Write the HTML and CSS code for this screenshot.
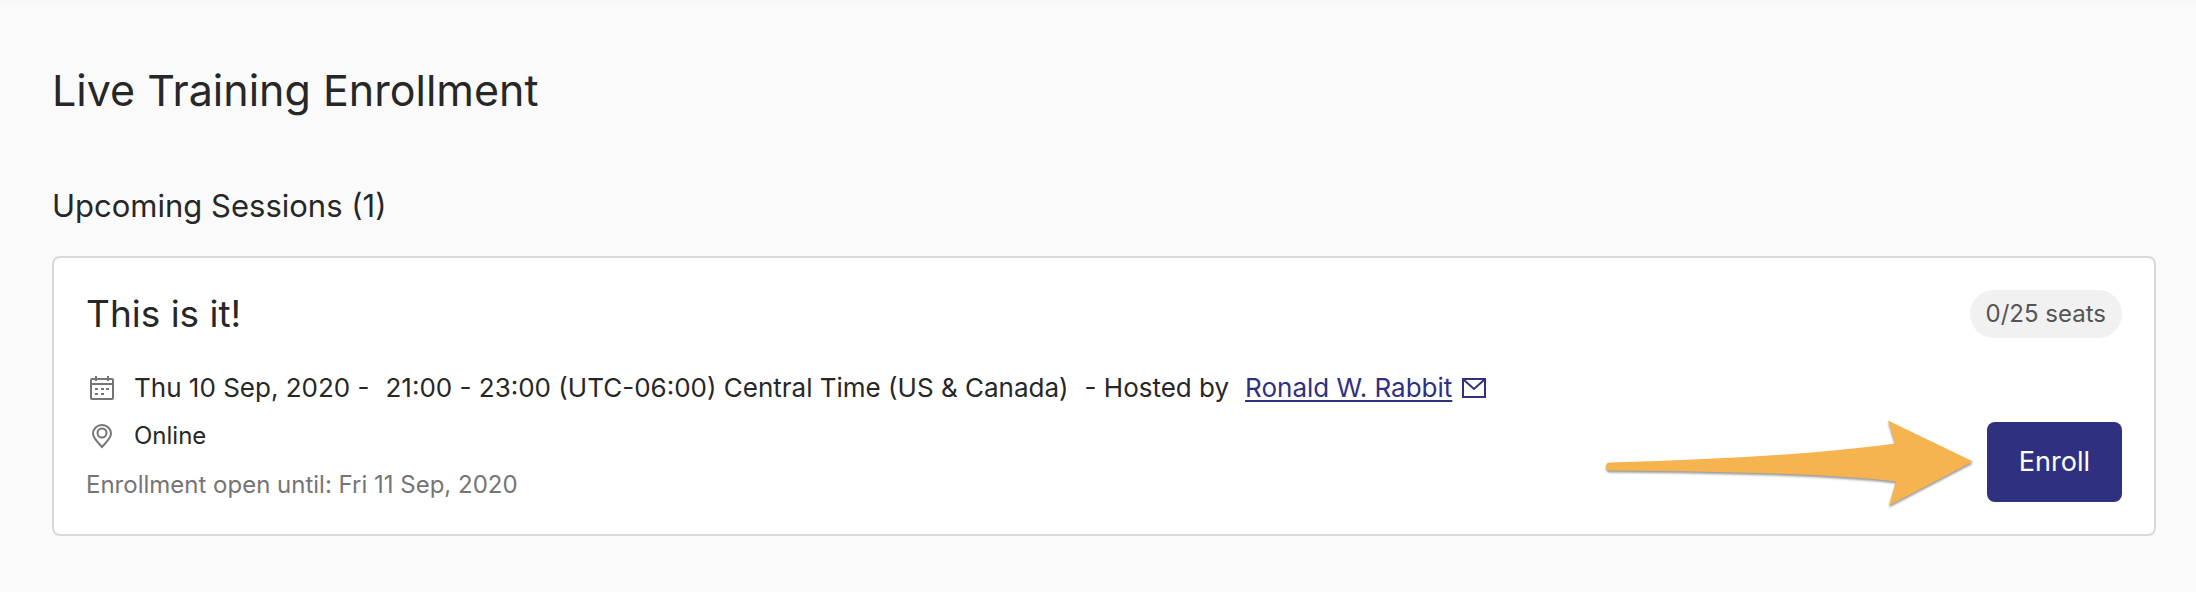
FILE: index.html
```html
<!DOCTYPE html>
<html lang="en">
<head>
    <meta charset="UTF-8">
    <meta name="viewport" content="width=device-width, initial-scale=1.0">
    <title>Live Training Enrollment</title>
    <link rel="stylesheet" href="styles.css">
</head>
<body>
    <main class="page">
        <h1>Live Training Enrollment</h1>
        <h2>Upcoming Sessions (1)</h2>

        <section class="session">
            <div class="session-info">
                <h3>This is it!</h3>
                <div class="row date">
                    <svg class="icon" viewBox="0 0 32 32" fill="none" stroke="#757575" stroke-width="2">
                        <rect x="5" y="7" width="22" height="20" rx="1"/>
                        <path d="M5 12h22M10 4v5M22 4v5"/>
                        <path d="M9 17h3M15 17h3M20 17h3M9 22h3M15 22h3"/>
                    </svg>
                    <div class="when">
                        <span>Thu 10 Sep, 2020 -</span>
                        <span>21:00 - 23:00 (UTC-06:00) Central Time (US &amp; Canada)</span>
                        <span>- Hosted by</span>
                        <div class="host">
                            <a href="#">Ronald W. Rabbit</a>
                            <a href="#" class="mail" aria-label="Email Ronald W. Rabbit">
                                <svg viewBox="0 0 24 20" fill="none" stroke="#2f3180" stroke-width="2">
                                    <rect x="1" y="1" width="22" height="18"/>
                                    <path d="M2 2l10 9 10-9"/>
                                </svg>
                            </a>
                        </div>
                    </div>
                </div>
                <div class="row">
                    <svg class="icon" viewBox="0 0 32 32" fill="none" stroke="#757575" stroke-width="2">
                        <path d="M16 27C12 22.500 7 18 7 13.500a9 8.500 0 0 1 18 0C25 18 20 22.500 16 27z"/>
                        <circle cx="16" cy="13" r="4.500"/>
                    </svg>
                    <span>Online</span>
                </div>
                <p class="deadline">Enrollment open until: Fri 11 Sep, 2020</p>
            </div>

            <div class="session-side">
                <span class="seats">0/25 seats</span>
                <div class="enroll">
                    <svg class="arrow" viewBox="0 0 372 96" aria-hidden="true">
                        <path fill="#f5b450" d="M9 46.500Q200 41 294 27.500L287 4.500 372 45.500 288 89.500 295 65.500Q222 56 9 54.500A4 4 0 0 1 9 46.500z"/>
                    </svg>
                    <button type="button">Enroll</button>
                </div>
            </div>
        </section>
    </main>
</body>
</html>
```
FILE: styles.css
```css
* {
    box-sizing: border-box;
}

body {
    margin: 0;
    background: linear-gradient(#f7f7f7, #fafafa 6px) #fafafa;
    color: #272727;
    font-family: Inter, "Liberation Sans", sans-serif;
    font-size: 24px;
}

h1, h2, h3, p {
    margin: 0;
    font-weight: 400;
}

.page {
    padding: 62px 40px 56px 52px;
}

h1 {
    font-size: 43px;
    line-height: 56px;
}

h2 {
    margin: 68px 0 30px;
    font-size: 31px;
    line-height: 40px;
}

h3 {
    margin-bottom: 26px;
    font-size: 37px;
    line-height: 48px;
}

.session {
    display: flex;
    justify-content: space-between;
    padding: 32px;
    background-color: #fff;
    border: 2px solid #d9d9d9;
    border-radius: 8px;
}

.row {
    display: flex;
    align-items: center;
    gap: 16px;
    line-height: 48px;
}

.date {
    font-size: 26px;
}

.when {
    display: flex;
    align-items: center;
    gap: 16px;
}

.host {
    display: flex;
    align-items: center;
    gap: 10px;
}

.icon {
    width: 32px;
    height: 32px;
}

a {
    color: #2f3180;
    text-underline-offset: 3px;
    text-decoration-thickness: 2px;
}

.mail {
    display: flex;
}

.mail svg {
    width: 24px;
    height: 20px;
}

.deadline {
    margin-top: 8px;
    color: #757575;
    line-height: 34px;
}

.session-side {
    display: flex;
    flex-direction: column;
    align-items: flex-end;
    justify-content: space-between;
}

.seats {
    padding: 0 16px;
    background-color: #f1f1f1;
    border-radius: 24px;
    color: #555;
    line-height: 48px;
}

.enroll {
    position: relative;
}

.arrow {
    position: absolute;
    top: -6px;
    right: calc(100% + 14px);
    width: 372px;
    height: 96px;
    filter: drop-shadow(0 2px 1px rgba(0, 0, 0, 0.4));
}

button {
    padding: 0 32px;
    background-color: #2f3180;
    border: none;
    border-radius: 8px;
    color: #fff;
    font-family: inherit;
    font-size: 27px;
    line-height: 80px;
    cursor: pointer;
}
```
